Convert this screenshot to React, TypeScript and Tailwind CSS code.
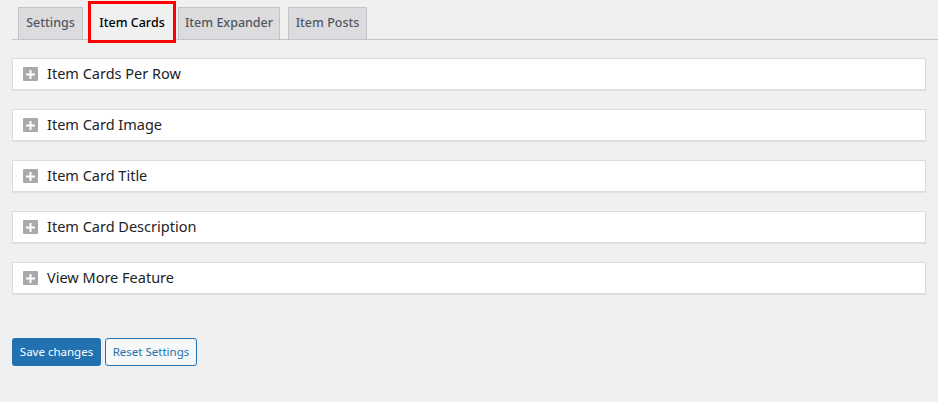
import React from "react";

const font = { fontFamily: '"Noto Sans", "Open Sans", Arial, sans-serif' };

function PlusIcon() {
  return (
    <span className="w-[15px] h-[14px] bg-[#a7aaad] rounded-[1px] flex items-center justify-center shrink-0">
      <svg width="9" height="9" viewBox="0 0 9 9">
        <rect x="3.5" y="0" width="2" height="9" fill="#fff" />
        <rect x="0" y="3.5" width="9" height="2" fill="#fff" />
      </svg>
    </span>
  );
}

const panels = [
  "Item Cards Per Row",
  "Item Card Image",
  "Item Card Title",
  "Item Card Description",
  "View More Feature",
];

export default function App() {
  return (
    <div className="w-[938px] h-[402px] bg-[#f0f0f1] overflow-hidden text-[#1d2327]" style={font}>
      <div className="pt-[1px] pl-[12px]">
        <div className="flex items-end border-b border-[#c3c4c7] h-[39px]">
          <div className="ml-[6px] h-[32px] w-[65px] flex items-center justify-center bg-[#dcdcde] border border-[#c3c4c7] border-b-0 text-[12.5px] font-medium text-[#50575e]">
            Settings
          </div>
          <div className="ml-[5px] h-[42px] w-[88px] shrink-0 border-[3px] border-[#ff0000] flex items-end justify-center relative top-[4px] bg-[#f0f0f1]">
            <div className="h-[36px] w-full pt-[3px] flex items-center justify-center text-[12.5px] font-medium text-black">
              Item Cards
            </div>
          </div>
          <div className="ml-[2px] h-[32px] w-[102px] flex items-center justify-center bg-[#dcdcde] border border-[#c3c4c7] border-b-0 text-[12.5px] font-medium text-[#50575e]">
            Item Expander
          </div>
          <div className="ml-[8px] h-[32px] w-[79px] flex items-center justify-center bg-[#dcdcde] border border-[#c3c4c7] border-b-0 text-[12.5px] font-medium text-[#50575e]">
            Item Posts
          </div>
        </div>
      </div>
      <div className="pl-[12px] pr-[12px] pt-[18px] flex flex-col gap-[19px]">
        {panels.map((p) => (
          <div
            key={p}
            className="h-[32px] bg-white border border-[#dcdcde] shadow-[0_1px_1px_rgba(0,0,0,0.06)] flex items-center pl-[10px] gap-[9px]"
          >
            <PlusIcon />
            <span className="text-[14.5px] font-normal text-[#1d2327]">{p}</span>
          </div>
        ))}
      </div>
      <div className="pl-[12px] pt-[44px] flex gap-[4px]">
        <button className="h-[28px] w-[89px] rounded-[3px] bg-[#2271b1] text-white text-[11.5px] flex items-center justify-center">
          Save changes
        </button>
        <button className="h-[28px] w-[92px] rounded-[3px] bg-[#f6f7f7] border border-[#2271b1] text-[#2271b1] text-[11.5px] flex items-center justify-center">
          Reset Settings
        </button>
      </div>
    </div>
  );
}
